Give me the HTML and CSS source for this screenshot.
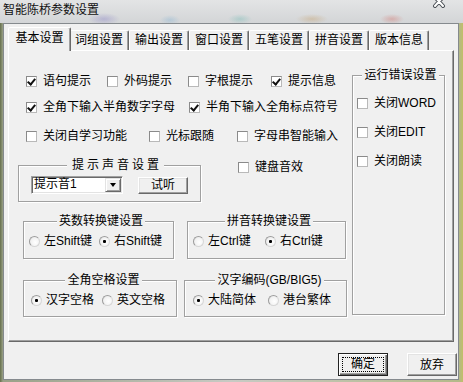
FILE: index.html
```html
<!DOCTYPE html>
<html lang="zh-CN">
<head>
    <meta charset="UTF-8">
    <meta name="viewport" content="width=device-width, initial-scale=1.0">
    <title>智能陈桥参数设置</title>
    <link rel="stylesheet" href="styles.css">
</head>
<body>
<div class="titlebar">
    <span class="title">智能陈桥参数设置</span>
    <svg class="close" width="14" height="13" viewBox="0 0 14 13">
        <path d="M3 2 L11 11 M11 2 L3 11" stroke="#4a4f55" stroke-width="4" stroke-linecap="round"/>
        <path d="M3 2 L11 11 M11 2 L3 11" stroke="#fff" stroke-width="2" stroke-linecap="round"/>
    </svg>
</div>
<div class="dialog">
    <div class="tabs">
        <div class="tab active">基本设置</div>
        <div class="tab">词组设置</div>
        <div class="tab">输出设置</div>
        <div class="tab">窗口设置</div>
        <div class="tab">五笔设置</div>
        <div class="tab">拼音设置</div>
        <div class="tab">版本信息</div>
    </div>
    <div class="panel">
        <div class="main">
            <div class="checks r1">
                <label class="check"><span class="box on"></span>语句提示</label>
                <label class="check"><span class="box"></span>外码提示</label>
                <label class="check"><span class="box"></span>字根提示</label>
                <label class="check"><span class="box on"></span>提示信息</label>
            </div>
            <div class="checks r2">
                <label class="check"><span class="box on"></span>全角下输入半角数字字母</label>
                <label class="check"><span class="box on"></span>半角下输入全角标点符号</label>
            </div>
            <div class="checks r3">
                <label class="check"><span class="box"></span>关闭自学习功能</label>
                <label class="check"><span class="box"></span>光标跟随</label>
                <label class="check"><span class="box"></span>字母串智能输入</label>
            </div>
            <div class="row sound-row">
                <fieldset class="group sound">
                    <legend class="spaced">提示声音设置</legend>
                    <div class="sound-body">
                        <div class="combo">
                            <span class="combo-text">提示音1</span>
                            <span class="drop"><span class="arrow"></span></span>
                        </div>
                        <button class="btn small">试听</button>
                    </div>
                </fieldset>
                <label class="check keys"><span class="box"></span>键盘音效</label>
            </div>
            <div class="row r5">
                <fieldset class="group g-en">
                    <legend>英数转换键设置</legend>
                    <div class="radios">
                        <label class="radio w70"><span class="dot"></span>左Shift键</label>
                        <label class="radio"><span class="dot on"></span>右Shift键</label>
                    </div>
                </fieldset>
                <fieldset class="group g-py">
                    <legend>拼音转换键设置</legend>
                    <div class="radios">
                        <label class="radio w72"><span class="dot"></span>左Ctrl键</label>
                        <label class="radio"><span class="dot on"></span>右Ctrl键</label>
                    </div>
                </fieldset>
            </div>
            <div class="row r6">
                <fieldset class="group g-space">
                    <legend>全角空格设置</legend>
                    <div class="radios">
                        <label class="radio w71"><span class="dot on"></span>汉字空格</label>
                        <label class="radio"><span class="dot"></span>英文空格</label>
                    </div>
                </fieldset>
                <fieldset class="group g-code">
                    <legend>汉字编码(GB/BIG5)</legend>
                    <div class="radios">
                        <label class="radio w75"><span class="dot on"></span>大陆简体</label>
                        <label class="radio"><span class="dot"></span>港台繁体</label>
                    </div>
                </fieldset>
            </div>
        </div>
        <fieldset class="group errors">
            <legend>运行错误设置</legend>
            <label class="check"><span class="box"></span>关闭WORD</label>
            <label class="check"><span class="box"></span>关闭EDIT</label>
            <label class="check"><span class="box"></span>关闭朗读</label>
        </fieldset>
    </div>
    <div class="actions">
        <button class="btn default"><span class="focus">确定</span></button>
        <button class="btn">放弃</button>
    </div>
</div>
</body>
</html>
```

FILE: styles.css
```css
* {
    box-sizing: border-box;
    margin: 0;
    padding: 0;
}

body {
    width: 463px;
    height: 382px;
    overflow: hidden;
    font-family: 'Liberation Sans', 'Noto Sans CJK SC', sans-serif;
    font-size: 12px;
    line-height: 16px;
    color: #000;
    background: linear-gradient(to right, #66704c 0, #9aa188 3px, #c8cac4 50%, #b3b98a calc(100% - 4px), #c2bf68 100%);
}

/* glass title bar */
.titlebar {
    display: flex;
    align-items: flex-start;
    height: 23px;
    padding-left: 3px;
    background:
        radial-gradient(ellipse 16px 6px at 104px 19px, rgba(110, 100, 190, 0.3), transparent),
        radial-gradient(ellipse 10px 5px at 170px 20px, rgba(90, 160, 210, 0.25), transparent),
        radial-gradient(ellipse 12px 5px at 240px 19px, rgba(60, 170, 160, 0.25), transparent),
        radial-gradient(ellipse 16px 5px at 312px 19px, rgba(190, 140, 70, 0.3), transparent),
        radial-gradient(ellipse 12px 5px at 392px 19px, rgba(210, 80, 70, 0.3), transparent),
        linear-gradient(#e3e4e5, #d3d5d7);
}

.title {
    margin-top: 3px;
    line-height: 14px;
    color: #111;
}

.close {
    margin: -5px 17px 0 auto;
}

/* client area */
.dialog {
    width: 456px;
    height: 357px;
    margin-left: 3px;
    background-color: #f0f0f0;
    border: 1px solid #858a8e;
}

.tabs {
    display: flex;
    align-items: flex-end;
    height: 23px;
    margin: 3px 0 0 4px;
}

.tab {
    width: 60px;
    height: 20px;
    line-height: 19px;
    text-align: center;
    white-space: nowrap;
    background-color: #f0f0f0;
    border: 1px solid;
    border-bottom: none;
    border-color: #fff #696969 transparent #fff;
    border-radius: 2px 2px 0 0;
    box-shadow: inset -1px 0 #a0a0a0;
}

.tab.active {
    position: relative;
    z-index: 1;
    width: 63px;
    height: 24px;
    line-height: 21px;
    margin: 0 -2px -1px 0;
}

.panel {
    display: flex;
    align-items: flex-start;
    width: 446px;
    height: 292px;
    margin-left: 4px;
    padding-left: 9px;
    border: 1px solid;
    border-color: #fff #696969 #696969 #fff;
    box-shadow: inset -1px -1px #a0a0a0;
}

.main {
    width: 334px;
}

/* checkbox rows */
.checks {
    display: grid;
    height: 16px;
    margin-left: 8px;
}

.r1 { margin-top: 22px; grid-template-columns: 81px 81px 83px auto; }
.r2 { margin-top: 10px; grid-template-columns: 163px auto; }
.r3 { margin-top: 13px; grid-template-columns: 123px 88px auto; }

.check {
    display: flex;
    align-items: center;
    height: 16px;
    white-space: nowrap;
}

.box {
    position: relative;
    width: 11px;
    height: 11px;
    margin-right: 6px;
    flex-shrink: 0;
    background-color: #fff;
    border: 1px solid;
    border-color: #8a8a8a #b9b9b9 #b9b9b9 #8a8a8a;
}

.box.on::after {
    content: "";
    position: absolute;
    left: 2px;
    top: 0;
    width: 3px;
    height: 6px;
    border: solid #111;
    border-width: 0 2px 2px 0;
    transform: rotate(40deg);
}

.row {
    display: flex;
    align-items: flex-start;
}

/* group boxes */
.group {
    min-inline-size: 0;
    border: 1px solid #a0a0a0;
    box-shadow: inset 1px 1px #fff, 1px 1px #fff;
}

.group legend {
    margin: 0 auto;
    padding: 0 2px;
    line-height: 14px;
    white-space: nowrap;
    background-color: #f0f0f0;
}

.group legend.spaced {
    letter-spacing: 3px;
    padding-left: 5px;
}

.sound-row {
    margin-top: 14px;
}

.sound {
    width: 183px;
    height: 44px;
    padding: 4px 0 0 12px;
}

.sound-body {
    display: flex;
    align-items: flex-start;
}

.combo {
    display: flex;
    justify-content: space-between;
    width: 92px;
    height: 18px;
    background-color: #fff;
    border: 1px solid;
    border-color: #a0a0a0 #fff #fff #a0a0a0;
    box-shadow: inset 1px 1px #696969, inset -1px -1px #e3e3e3;
    padding: 1px 1px 1px 2px;
}

.combo-text {
    line-height: 13px;
}

.drop {
    display: flex;
    align-items: center;
    justify-content: center;
    width: 16px;
    height: 14px;
    margin-top: 0;
    background-color: #f0f0f0;
    border: 1px solid;
    border-color: #e3e3e3 #696969 #696969 #e3e3e3;
    box-shadow: inset 1px 1px #fff, inset -1px -1px #a0a0a0;
}

.arrow {
    width: 0;
    height: 0;
    border-top: 4px solid #000;
    border-left: 3.5px solid transparent;
    border-right: 3.5px solid transparent;
}

.keys {
    margin: 1px 0 0 37px;
}

.r5 { margin-top: 12px; }
.r6 { margin-top: 14px; }

.g-en { width: 151px; height: 45px; margin-left: 5px; padding: 6px 0 0 5px; }
.g-py { width: 159px; height: 45px; margin-left: 13px; padding: 6px 0 0 5px; }
.g-space { width: 154px; height: 44px; margin-left: 5px; padding: 6px 0 0 7px; }
.g-code { width: 163px; height: 44px; margin-left: 7px; padding: 6px 0 0 8px; }

.radios {
    display: flex;
}

.radio {
    display: flex;
    align-items: center;
    height: 14px;
    white-space: nowrap;
}

.w70 { width: 70px; }
.w71 { width: 71px; }
.w72 { width: 72px; }
.w75 { width: 75px; }

.dot {
    position: relative;
    width: 11px;
    height: 11px;
    margin-right: 4px;
    flex-shrink: 0;
    border-radius: 50%;
    background: radial-gradient(circle at 60% 60%, #fff 0, #f4f4f4 50%, #e2e2e2 100%);
    border: 1px solid;
    border-color: #9c9c9c #d6d6d6 #d6d6d6 #9c9c9c;
}

.dot.on::after {
    content: "";
    position: absolute;
    left: 3px;
    top: 3px;
    width: 3px;
    height: 3px;
    border-radius: 1px;
    background-color: #000;
}

.errors {
    width: 93px;
    height: 247px;
    margin-top: 17px;
    padding: 13px 0 0 4px;
}

.errors .check + .check {
    margin-top: 13px;
}

/* buttons */
.btn {
    width: 50px;
    height: 23px;
    font: inherit;
    color: #000;
    background-color: #f0f0f0;
    border: 1px solid;
    border-color: #fff #696969 #696969 #fff;
    box-shadow: inset -1px -1px #a0a0a0, inset 1px 1px #e3e3e3;
}

.btn.small {
    height: 17px;
    margin: 1px 0 0 15px;
    line-height: 13px;
}

.btn.default {
    border-color: #222;
    box-shadow: inset 1px 1px #fff, inset -1px -1px #696969, inset -2px -2px #a0a0a0;
    padding: 3px;
}

.focus {
    display: block;
    height: 100%;
    line-height: 13px;
    border: 1px dotted #000;
}

.actions {
    display: flex;
    justify-content: flex-end;
    gap: 19px;
    margin: 11px 1px 0 0;
}
```
